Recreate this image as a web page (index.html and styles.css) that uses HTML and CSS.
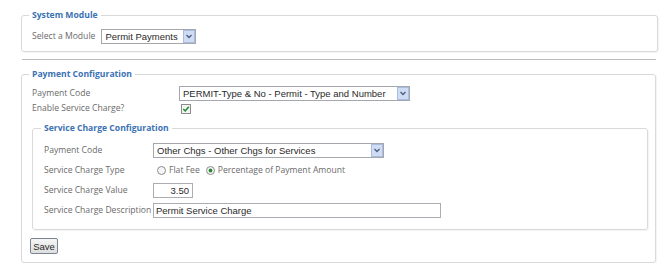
FILE: index.html
```html
<!DOCTYPE html>
<html lang="en">
<head>
<meta charset="UTF-8">
<meta name="viewport" content="width=device-width, initial-scale=1.0">
<title>Service Charge Setup</title>
<link rel="stylesheet" href="styles.css">
</head>
<body>

<div class="page">

    <fieldset class="box box-module">
        <legend>System Module</legend>
        <div class="module-row">
            <label class="lbl" for="module">Select a Module</label>
            <span class="select select-module">
                <select id="module" name="module">
                    <option>Permit Payments</option>
                </select>
                <svg class="arrow" width="12" height="13" viewBox="0 0 12 13"><rect x="0.5" y="0.5" width="11" height="12" fill="#cfdcf3" stroke="#a9bde0"/><polyline points="3.5,5 6,7.5 8.5,5" fill="none" stroke="#4d6185" stroke-width="1.4"/></svg>
            </span>
        </div>
    </fieldset>

    <hr class="divider">

    <form id="paymentForm">
        <fieldset class="box box-payment">
            <legend>Payment Configuration</legend>

            <div class="grid grid-outer">
                <label class="lbl" for="paycode">Payment Code</label>
                <span class="select select-wide">
                    <select id="paycode" name="paycode">
                        <option>PERMIT-Type &amp; No - Permit - Type and Number</option>
                    </select>
                    <svg class="arrow" width="12" height="13" viewBox="0 0 12 13"><rect x="0.5" y="0.5" width="11" height="12" fill="#cfdcf3" stroke="#a9bde0"/><polyline points="3.5,5 6,7.5 8.5,5" fill="none" stroke="#4d6185" stroke-width="1.4"/></svg>
                </span>

                <label class="lbl" for="enablesc">Enable Service Charge?</label>
                <span class="check">
                    <svg width="10" height="10" viewBox="0 0 10 10"><rect x="0.5" y="0.5" width="9" height="9" fill="#f4f4f4" stroke="#8c8c8c"/><polyline points="2.3,5 4.2,7 7.8,2.8" fill="none" stroke="#1f8a2a" stroke-width="1.5"/></svg>
                </span>
            </div>

            <fieldset class="box box-inner">
                <legend>Service Charge Configuration</legend>

                <div class="grid grid-inner">
                    <label class="lbl" for="sccode">Payment Code</label>
                    <span class="select select-wide">
                        <select id="sccode" name="sccode">
                            <option>Other Chgs - Other Chgs for Services</option>
                        </select>
                        <svg class="arrow" width="12" height="13" viewBox="0 0 12 13"><rect x="0.5" y="0.5" width="11" height="12" fill="#cfdcf3" stroke="#a9bde0"/><polyline points="3.5,5 6,7.5 8.5,5" fill="none" stroke="#4d6185" stroke-width="1.4"/></svg>
                    </span>

                    <span class="lbl">Service Charge Type</span>
                    <span class="radios">
                        <span class="radio">
                            <svg width="9" height="9" viewBox="0 0 9 9"><circle cx="4.5" cy="4.5" r="4" fill="#f6f6f6" stroke="#8c8c8c"/></svg>
                            Flat Fee
                        </span>
                        <span class="radio">
                            <svg width="9" height="9" viewBox="0 0 9 9"><circle cx="4.5" cy="4.5" r="4" fill="#f6f6f6" stroke="#8c8c8c"/><circle cx="4.5" cy="4.5" r="1.9" fill="#2a8a35"/></svg>
                            Percentage of Payment Amount
                        </span>
                    </span>

                    <label class="lbl" for="scvalue">Service Charge Value</label>
                    <input class="txt txt-value" type="text" id="scvalue" name="scvalue" value="3.50">

                    <label class="lbl" for="scdesc">Service Charge Description</label>
                    <input class="txt txt-desc" type="text" id="scdesc" name="scdesc" value="Permit Service Charge">
                </div>
            </fieldset>

            <input type="submit" id="saveBtn" value="Save">
        </fieldset>
    </form>

</div>

</body>
</html>
```

FILE: styles.css
```css
body {
        margin: 0;
        padding: 0;
        background-color: #ffffff;
        font-family: "Open Sans", "Liberation Sans", sans-serif;
    }
    .page {
        width: 636px;
        margin-left: 21px;
        padding-top: 9px;
    }
    form {
        margin: 0;
    }
    fieldset {
        margin: 0;
        min-width: 0;
    }
    .box {
        border: 1px solid #d9d9d9;
        border-radius: 3px;
        box-shadow: 1px 1px 1px rgba(0,0,0,0.05);
    }
    legend {
        font-size: 8.6px;
        font-weight: bold;
        line-height: 12px;
        color: #3b72b3;
        padding: 0 3px;
        margin-left: -3px;
    }
    .lbl {
        font-size: 8.6px;
        line-height: 15px;
        color: #6a6a6a;
        white-space: nowrap;
    }

    /* system module */
    .box-module {
        width: 637px;
        box-sizing: border-box;
        padding: 8px 10px 7px 10px;
    }
    .module-row {
        display: flex;
        align-items: center;
        gap: 6px;
    }
    .divider {
        border: none;
        border-top: 1px solid #bdbdbd;
        width: 634px;
        margin: 7px 0 8px 1px;
        height: 0;
    }

    /* select boxes */
    .select {
        display: inline-flex;
        align-items: stretch;
        box-sizing: border-box;
        height: 15px;
        border: 1px solid #a4a8ad;
        background: #fff;
    }
    .select select {
        appearance: none;
        -webkit-appearance: none;
        border: none;
        outline: none;
        flex: 1;
        min-width: 0;
        margin: 0;
        padding: 0 3px;
        height: 13px;
        background: #fff;
        font-family: "Liberation Sans", Arial, sans-serif;
        font-size: 9.5px;
        font-weight: normal;
        color: #2a2a2a;
    }
    .select .arrow {
        display: block;
        flex: none;
    }
    .select-module {
        width: 95px;
    }
    .select-wide {
        width: 231px;
    }

    /* payment configuration */
    .box-payment {
        width: 635px;
        box-sizing: border-box;
        padding: 0 7px 8px 10px;
    }
    .grid {
        display: grid;
        align-items: center;
    }
    .grid-outer {
        grid-template-columns: 147px auto;
        justify-items: start;
        margin-top: 6px;
    }
    .check {
        display: flex;
        align-items: center;
        height: 14px;
        margin-left: 2px;
    }
    .box-inner {
        margin-top: 6px;
        padding: 9px 10px 11px 11px;
    }
    .grid-inner {
        grid-template-columns: 109px auto;
        justify-items: start;
        row-gap: 5px;
    }
    .radios {
        display: flex;
        align-items: center;
        gap: 6px;
        margin-left: 4px;
    }
    .radio {
        display: inline-flex;
        align-items: center;
        gap: 3px;
        font-size: 8.6px;
        line-height: 15px;
        color: #6a6a6a;
    }
    .txt {
        box-sizing: border-box;
        height: 15px;
        margin: 0;
        border: 1px solid #abadb3;
        padding: 0 2px;
        font-family: "Liberation Sans", Arial, sans-serif;
        font-size: 9.5px;
        color: #2a2a2a;
    }
    .txt-value {
        width: 40px;
        text-align: right;
        padding-right: 3px;
    }
    .txt-desc {
        width: 288px;
    }

    #saveBtn {
        display: block;
        margin: 8px 0 0 -2px;
        width: 28px;
        height: 16px;
        padding: 0;
        border: 1px solid #7a8591;
        border-radius: 2px;
        background: linear-gradient(#f6f6f6, #dedede);
        font-family: "Liberation Sans", Arial, sans-serif;
        font-size: 9.5px;
        color: #2a2a2a;
        cursor: pointer;
    }
```
